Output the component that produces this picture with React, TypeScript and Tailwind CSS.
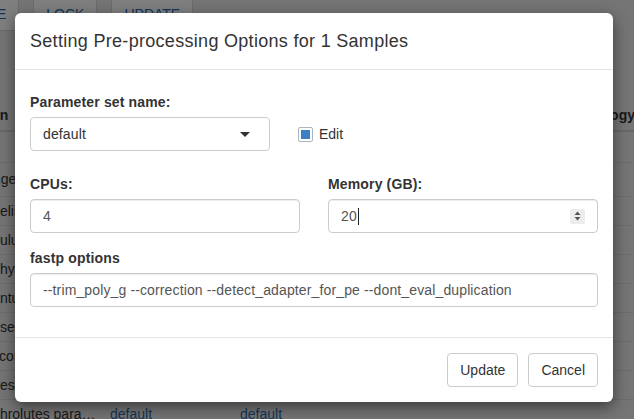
import React from "react";

const bgRows: { name: string; a?: string; b?: string }[] = [
  { name: "Ongeria aurantiaca" },
  { name: "Chelisia fusca" },
  { name: "Caululus minor" },
  { name: "Ochyrota nigra" },
  { name: "Dentula alba" },
  { name: "Roseola pallida" },
  { name: "Bacoria rubra" },
  { name: "Cnesia viridis" },
  { name: "Ochrolutes para…", a: "default", b: "default" },
];

const Field = ({ label, children }: { label: string; children: React.ReactNode }) => (
  <div>
    <div className="mb-[5px] text-[14px] font-bold leading-[20px] tracking-[0.15px] text-[#333]">{label}</div>
    {children}
  </div>
);

const inputCls =
  "flex h-[34px] w-full items-center rounded-[4px] border border-[#ccc] px-[12px] text-[14px] tracking-[0.13px] text-[#555] shadow-[inset_0_1px_1px_rgba(0,0,0,0.075)]";

const App = () => {
  return (
    <div className="relative h-[419px] w-[634px] overflow-hidden bg-[#eaeaea] font-['Liberation_Sans',Arial,sans-serif] text-[14px] text-[#333]">
      {/* page under the dialog */}
      <div className="-mt-[3px] ml-[-43px] flex gap-[14px]">
        {["SAVE", "LOCK", "UPDATE"].map((l) => (
          <div
            key={l}
            className="flex h-[34px] items-center rounded-[4px] border border-[#d8d8d8] bg-white px-3 text-[#2a6ab0]"
          >
            {l}
          </div>
        ))}
      </div>
      <div className="mt-[69px] ml-[-18px] w-[670px]">
        <div className="flex h-[32px] items-center border-b-2 border-[#d0d0d0] font-bold">
          <div className="w-[128px]">
            <span className="-ml-[14px]">Taxon</span>
          </div>
          <div className="w-[130px]">Preset</div>
          <div className="flex-1">Custom</div>
          <div className="pr-[17px]">Ontology</div>
        </div>
        <div className="h-[31px] border-b border-[#d8d8d8]" />
        {bgRows.map((r, i) => (
          <div
            key={r.name}
            className={`flex items-center border-b border-[#d8d8d8] ${i === 0 ? "h-[34px]" : "h-[29px]"}`}
          >
            <div className="w-[128px] whitespace-nowrap">{r.name}</div>
            <div className="w-[130px] text-[#2a6ab0]">{r.a}</div>
            <div className="flex-1 text-[#2a6ab0]">{r.b}</div>
          </div>
        ))}
      </div>

      {/* backdrop */}
      <div className="absolute inset-0 bg-black/50" />

      {/* dialog */}
      <div className="absolute left-[15px] top-[13px] w-[598px] rounded-[6px] bg-white shadow-[0_5px_15px_rgba(0,0,0,0.5)]">
        <div className="border-b border-[#e5e5e5] p-[15px]">
          <h4 className="text-[18px] leading-[26px] tracking-[0.3px] text-[#333]">
            Setting Pre-processing Options for 1 Samples
          </h4>
        </div>

        <div className="px-[15px] pb-[30px] pt-[22px]">
          <Field label="Parameter set name:">
            <div className="flex items-center">
              <div className="flex h-[34px] w-[240px] items-center justify-between rounded-[4px] border border-[#ccc] pl-[12px] pr-[19px] text-[#333]">
                <span className="tracking-[0.13px]">default</span>
                <svg width="10" height="5" viewBox="0 0 10 5">
                  <path d="M0 0 L10 0 L5 5 Z" fill="#333" />
                </svg>
              </div>
              <div className="ml-[28px] flex items-center gap-[6px]">
                <div className="h-[15px] w-[15px] rounded-[2px] border border-[#a9b4c2] bg-white p-[2px]">
                  <div className="h-full w-full bg-[#3b7fc6]" />
                </div>
                <span className="text-[#333]">Edit</span>
              </div>
            </div>
          </Field>

          <div className="mt-[23px] grid grid-cols-2 gap-x-[28px]">
            <Field label="CPUs:">
              <div className={inputCls}>4</div>
            </Field>
            <Field label="Memory (GB):">
              <div
                className={`${inputCls} justify-between border-[#66afe9] pr-[12px] shadow-[inset_0_1px_1px_rgba(0,0,0,0.075),0_0_8px_rgba(102,175,233,0.6)]`}
              >
                <span className="flex items-center">
                  20
                  <span className="ml-px inline-block h-[17px] w-px bg-[#222]" />
                </span>
                <span className="flex h-[15px] w-[15px] items-center justify-center rounded-[2px] bg-[#ececec]">
                  <svg width="7" height="10" viewBox="0 0 7 10">
                    <path d="M3.5 0.5 L6.5 4 L0.5 4 Z" fill="#555" />
                    <path d="M3.5 9.5 L6.5 6 L0.5 6 Z" fill="#555" />
                  </svg>
                </span>
              </div>
            </Field>
          </div>

          <div className="mt-[15px]">
            <Field label="fastp options">
              <div className={inputCls}>--trim_poly_g --correction --detect_adapter_for_pe --dont_eval_duplication</div>
            </Field>
          </div>
        </div>

        <div className="flex justify-end gap-[10px] border-t border-[#e5e5e5] p-[15px]">
          <div className="flex h-[34px] items-center rounded-[4px] border border-[#ccc] bg-white px-[12px] text-[#333]">
            Update
          </div>
          <div className="flex h-[34px] items-center rounded-[4px] border border-[#ccc] bg-white px-[12px] text-[#333]">
            Cancel
          </div>
        </div>
      </div>
    </div>
  );
};

export default App;
